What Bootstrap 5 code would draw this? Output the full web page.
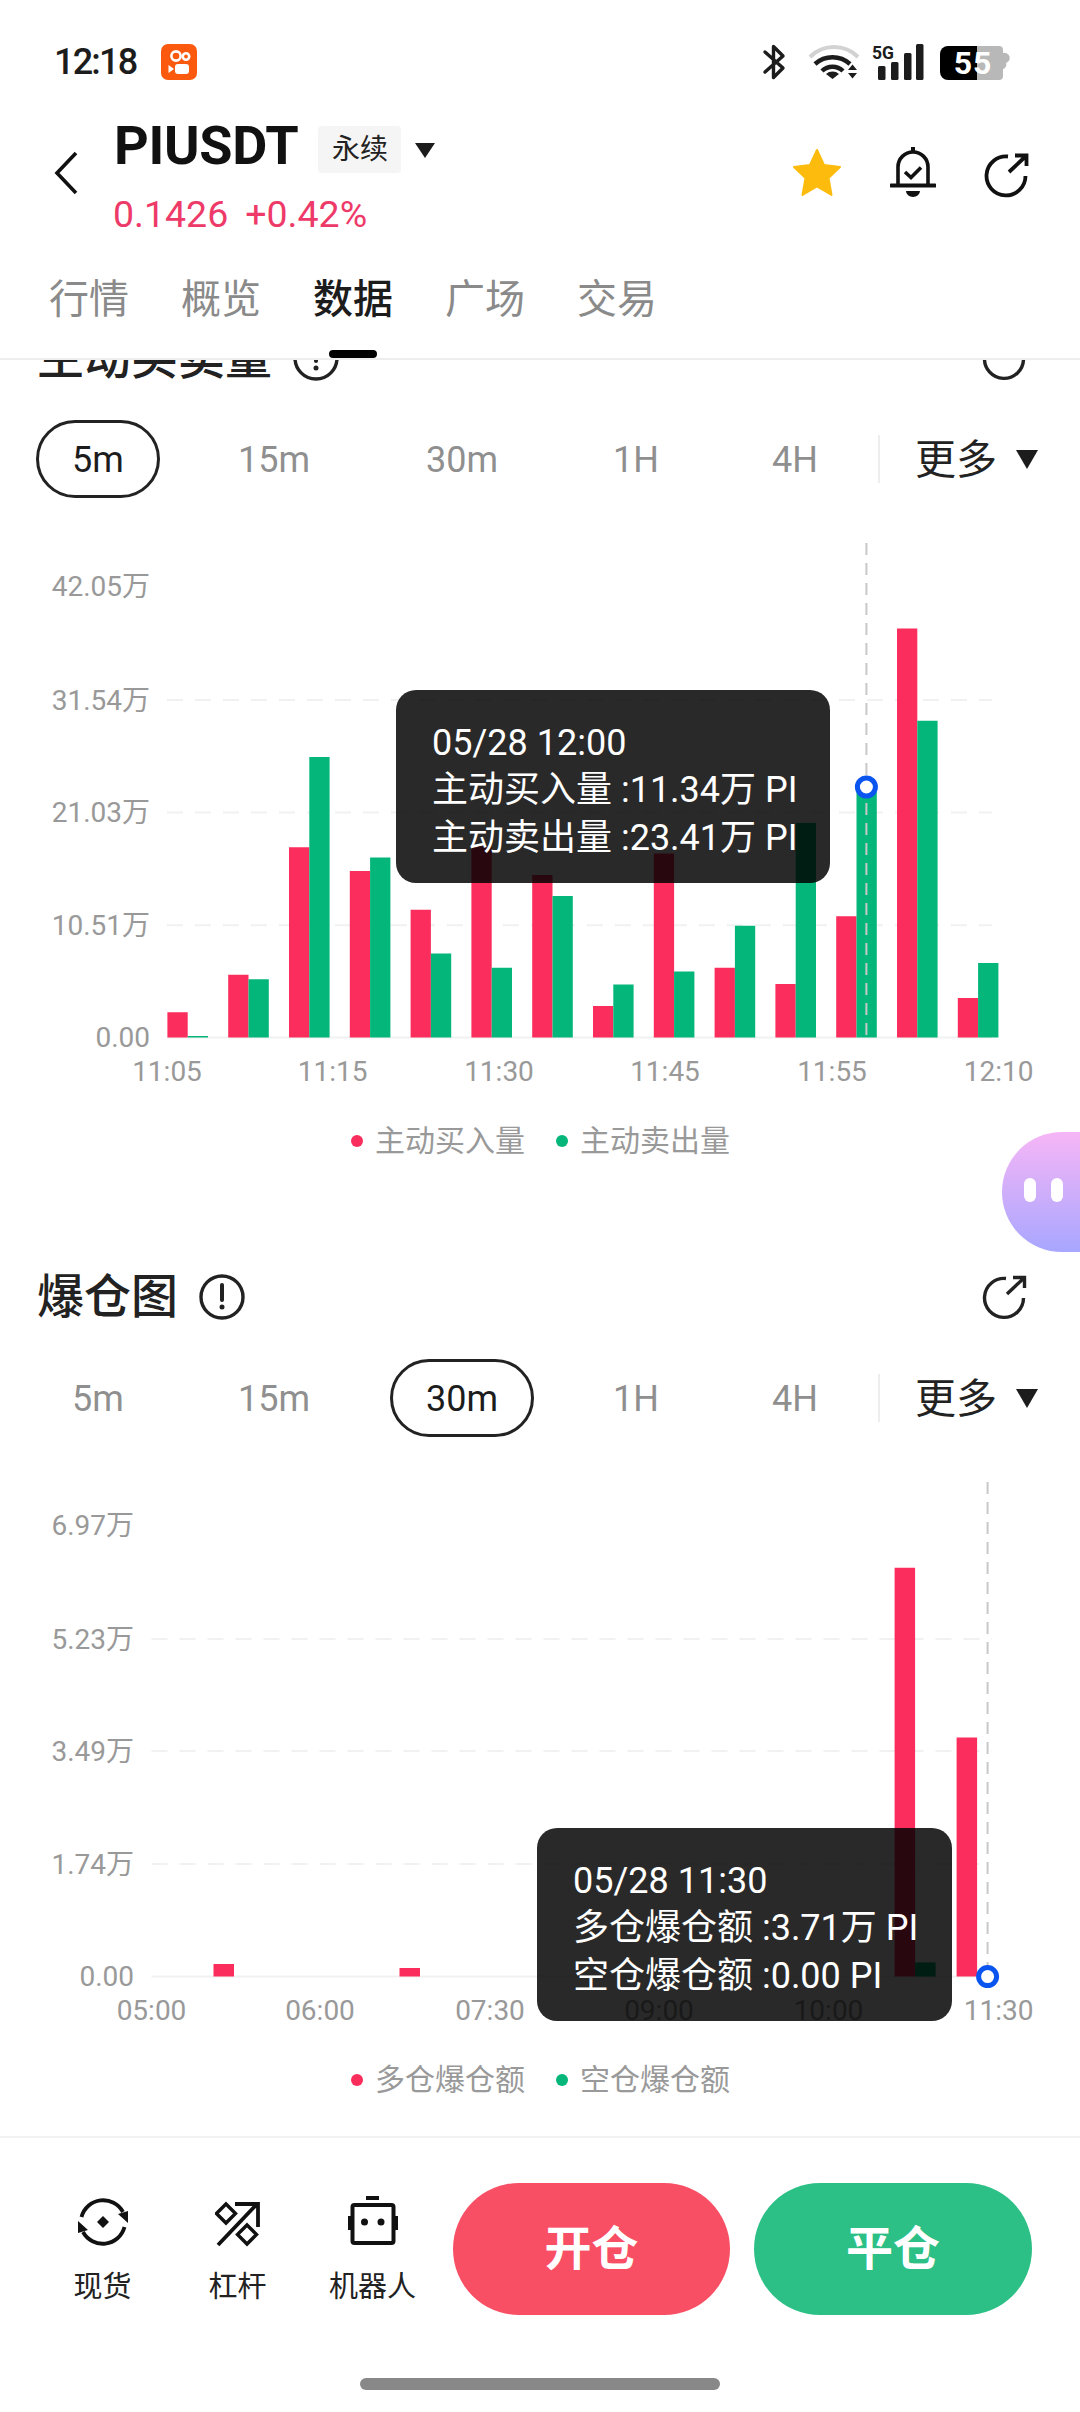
<!DOCTYPE html>
<html lang="zh">
<head>
<meta charset="utf-8">
<title>PIUSDT</title>
<link href="https://cdn.jsdelivr.net/npm/bootstrap@5.3.0/dist/css/bootstrap.min.css" rel="stylesheet">
<style>
html,body{margin:0;background:#fff}
body{font-family:Roboto,"Noto Sans CJK SC",sans-serif;color:#222}
svg{display:block;flex:none}
.phone{width:1080px;height:2412px;overflow:hidden;position:relative;background:#fff}
.sbar{height:118px;padding:40px 70px 0 54px}
.clock{font-size:36px;font-weight:500;line-height:44px;color:#1c1c1c;margin-right:25px;letter-spacing:-1.8px}
.navrow{height:118px;padding-left:54px;padding-right:50px}
.chev{margin-top:33px;margin-right:36px}
.sym{font-size:54px;font-weight:700;line-height:56px;color:#111;letter-spacing:-.3px}
.perp{width:83px;height:47px;background:#f5f5f5;border-radius:4px;font-size:28px;line-height:47px;text-align:center;margin:8px 14px 0 20px;color:#222}
.tri{width:0;height:0;border-left:10.5px solid transparent;border-right:10.5px solid transparent;border-top:15px solid #1c1c1c}
.pricex{font-size:37.500px;line-height:44px;color:#ee3a69;margin-top:18px;margin-left:-1px}
.pricex span+span{margin-left:17px}
.acts{margin-top:29px;gap:48px}
.tabsx{height:124px;border-bottom:2px solid #eee;padding:41px 0 0 49px;gap:52px;position:relative;background:#fff}
.tabsx a{font-size:40px;line-height:46px;color:#8a8a8a;text-decoration:none;padding:0;position:relative}
.tabsx a.act{color:#1c1c1c;font-weight:500}
.tabsx a.act::after{content:"";position:absolute;left:16px;width:48px;top:73px;height:8px;border-radius:4px;background:#000}
.scroll{height:1776px;overflow:hidden}
.scrollin{margin-top:-32.500px}
.ttlrow{height:60px;padding:0 52px 0 37px}
.ttl{font-size:47px;line-height:60px;font-weight:500;color:#222;margin-right:21px}
.prow{display:grid;grid-template-columns:124px 228px 148px 200px 118px auto;margin:32px 0 0 36px;height:78px;align-items:center}
.pcell{font-size:36px;color:#8f8f8f;text-align:center}
.pcell span{display:inline-block;padding:0 33px;height:78px;line-height:75px;border:3.500px solid transparent;border-radius:39px}
.pcell.on span{color:#1c1c1c;border-color:#222}
.moreb{margin-left:24px;border-left:2px solid #eee;height:48px;padding:2px 0 0 35px;font-size:41px;line-height:50px;color:#222;white-space:nowrap}
.moreb .tri{margin-left:19px;border-left-width:11.500px;border-right-width:11.500px;border-top-width:19px}
.chartx{position:relative;height:600px}
.chartx svg{margin-top:-1px}
.axl{font-size:28px;fill:#999;font-family:Roboto,"Noto Sans CJK SC",sans-serif}
.gridl{stroke:#f1f1f1;stroke-width:2;stroke-dasharray:16 12}
.basel{stroke:#f1f1f1;stroke-width:2}
.crossl{stroke:#c8c8c8;stroke-width:2;stroke-dasharray:12 8}
.tipx{position:absolute;height:193px;background:rgba(0,0,0,.84);border-radius:20px;color:#fff;font-size:36px;line-height:47.500px;padding:30px 0 0 36px;white-space:nowrap}
.tipa{left:396px;top:193px;width:434px}
.tipb{left:537px;top:392px;width:415px}
.legx{height:86px;padding:2px 0 0 351px;font-size:30px;color:#999;margin-bottom:84px}
.dotx{width:12px;height:12px;border-radius:50%;margin-right:12px}
.dotx.rd{background:#fb2d5c}
.dotx.gn{background:#04b67a;margin-left:31px}
.blobx{position:absolute;right:0;top:1132px;width:78px;height:120px;border-radius:60px 0 0 60px;background:linear-gradient(180deg,#f6b6f6,#a8a6ff);padding:46px 0 0 22px;gap:15px}
.blobx i{display:block;width:12px;height:24px;border-radius:6px;background:#fff}
.foot{height:275px;border-top:2px solid #f2f2f2;background:#fff}
.frow{padding:45px 48px 0 35px}
.fitem{width:135px;padding-top:13px;font-size:29px;line-height:40px;color:#222;text-align:center}
.fitem div{margin-top:19px}
.fitem .ficon{height:52px;margin-top:0}
.bigb{height:132px;width:277px;border-radius:66px;font-size:47px;font-weight:700;color:#fff;border:0;line-height:132px;padding:0}
.bigb:hover{color:#fff}
.bopen,.bopen:hover{background:#f94f65;margin-left:13px}
.bclose,.bclose:hover{background:#2cc086;margin-left:24px;width:278px}
.homeb{width:360px;height:12px;border-radius:6px;background:#888;margin:63px auto 0}
</style>
</head>
<body>
<div class="phone">

  <div class="sbar d-flex align-items-start">
    <span class="clock">12:18</span>
    <svg width="36" height="36" viewBox="0 0 36 36" style="margin-top:4px"><rect width="36" height="36" rx="7" fill="#fb5a0e"/><circle cx="15" cy="12" r="4.600" fill="none" stroke="#fff" stroke-width="2.600"/><circle cx="25" cy="12.500" r="3.200" fill="none" stroke="#fff" stroke-width="2.600"/><rect x="14" y="20" width="14" height="10" rx="3" fill="#fff"/><path d="M7.500 21l5.500 4-5.500 4z" fill="#fff"/></svg>
    <svg class="ms-auto" width="250" height="44" viewBox="760 40 250 44">
      <path d="M765 52l18 16-9.500 9.500V46.500L783 56l-18 16" fill="none" stroke="#1c1c1c" stroke-width="3.400" stroke-linejoin="round" stroke-linecap="round"/>
      <path d="M810 57a34 34 0 0 1 48 0" fill="none" stroke="#d2d2d2" stroke-width="4"/>
      <path d="M815 64a26 26 0 0 1 35 0M822 71a15 15 0 0 1 21 0" fill="none" stroke="#1c1c1c" stroke-width="4.500"/>
      <path d="M832.500 79l-6.500-5a10 10 0 0 1 13 0z" fill="#1c1c1c"/>
      <path d="M848 70l4.500-5.500 4.500 5.500zM848 73l4.500 5.500 4.500-5.500z" fill="#1c1c1c"/>
      <text x="872" y="59" font-size="19" font-weight="700" fill="#1c1c1c" textLength="22" lengthAdjust="spacingAndGlyphs">5G</text>
      <rect x="878" y="66" width="7.500" height="14" rx="1.500" fill="#1c1c1c"/><rect x="891" y="62" width="7.500" height="18" rx="1.500" fill="#1c1c1c"/><rect x="904" y="53" width="7.500" height="27" rx="1.500" fill="#1c1c1c"/><rect x="916" y="44" width="7.500" height="36" rx="1.500" fill="#1c1c1c"/>
      <path d="M977 46h22a4 4 0 0 1 4 4v3a4.500 4.500 0 0 1 3 10 4.500 4.500 0 0 1-3 6v7a4 4 0 0 1-4 4h-22z" fill="#b8b8b8"/>
      <path d="M977 46h-29a8 8 0 0 0-8 8v18a8 8 0 0 0 8 8h29z" fill="#000"/>
      <text x="973" y="74" text-anchor="middle" font-size="32" font-weight="700" fill="#fff" letter-spacing="1">55</text>
    </svg>
  </div>

  <div class="navrow d-flex align-items-start">
    <svg class="chev" width="24" height="44" viewBox="0 0 24 44"><path d="M22 2L3 22l19 20" fill="none" stroke="#111" stroke-width="3.600"/></svg>
    <div>
      <div class="d-flex align-items-start">
        <span class="sym">PIUSDT</span>
        <span class="perp">永续</span>
        <span class="tri" style="margin-top:25px"></span>
      </div>
      <div class="pricex"><span>0.1426</span><span>+0.42%</span></div>
    </div>
    <div class="acts ms-auto d-flex align-items-start">
      <svg width="50" height="50" viewBox="0 0 50 50"><path d="M25 3l7 15 16 2-11.500 11 3 17L25 39.500 10.500 48l3-17L2 20l16-2z" fill="#fdbb0d" stroke="#fdbb0d" stroke-width="2" stroke-linejoin="round"/></svg>
      <svg width="46" height="50" viewBox="0 0 46 50"><path d="M8 38V20a15 15 0 0 1 30 0v18" fill="none" stroke="#111" stroke-width="3.600"/><path d="M1 38.500h44" stroke="#111" stroke-width="4" stroke-linecap="round"/><path d="M23 0v5" stroke="#111" stroke-width="4"/><path d="M16 44h14a7 6 0 0 1-14 0z" fill="#111"/><path d="M15 25l6 5.500 10-10" fill="none" stroke="#111" stroke-width="3.600"/></svg>
      <svg width="46" height="46" viewBox="0 0 46 46" style="margin-top:5px"><path d="M24 4.500A19.500 19.500 0 1 0 41.500 24" fill="none" stroke="#111" stroke-width="3.800"/><path d="M25 20L42 4M31 3.500h11.500V14" fill="none" stroke="#111" stroke-width="3.800"/></svg>
    </div>
  </div>

  <nav class="tabsx nav">
    <a class="nav-link" href="#">行情</a>
    <a class="nav-link" href="#">概览</a>
    <a class="nav-link act" href="#">数据</a>
    <a class="nav-link" href="#">广场</a>
    <a class="nav-link" href="#">交易</a>
  </nav>

  <div class="scroll">
    <div class="scrollin">

      <section>
        <div class="ttlrow d-flex align-items-center">
          <span class="ttl">主动买卖量</span>
          <svg width="46" height="46" viewBox="0 0 46 46"><circle cx="23" cy="23" r="21" fill="none" stroke="#222" stroke-width="3.400"/><path d="M23 11v15" stroke="#222" stroke-width="4" stroke-linecap="round"/><circle cx="23" cy="33" r="2.500" fill="#222"/></svg>
          <svg class="ms-auto" width="46" height="46" viewBox="0 0 46 46"><path d="M24 4.500A19.500 19.500 0 1 0 41.500 24" fill="none" stroke="#222" stroke-width="3.400"/><path d="M25 20L42 4M31 3.500h11.500V14" fill="none" stroke="#222" stroke-width="3.400"/></svg>
        </div>
        <div class="prow">
          <div class="pcell on"><span>5m</span></div>
          <div class="pcell"><span>15m</span></div>
          <div class="pcell"><span>30m</span></div>
          <div class="pcell"><span>1H</span></div>
          <div class="pcell"><span>4H</span></div>
          <div class="moreb d-flex align-items-center">更多<span class="tri"></span></div>
        </div>
        <div class="chartx">
          <svg width="1080" height="600" viewBox="0 0 1080 600">
            <path class="gridl" d="M167 203H992M167 315.600H992M167 428.300H992"/>
            <path class="basel" d="M167 540.600H992"/>
            <g class="axl" text-anchor="end" dominant-baseline="central">
              <text x="150" y="89">42.05万</text><text x="150" y="203">31.54万</text><text x="150" y="315">21.03万</text><text x="150" y="428">10.51万</text><text x="150" y="540">0.00</text>
            </g>
            <g class="axl" text-anchor="middle" dominant-baseline="central">
              <text x="167" y="574">11:05</text><text x="332.600" y="574">11:15</text><text x="499" y="574">11:30</text><text x="665" y="574">11:45</text><text x="832" y="574">11:55</text><text x="998.600" y="574">12:10</text>
            </g>
            <path fill="#fb2d5c" d="M167.400 540.600V515.200h20.300V540.600zM228.200 540.600V477.700h20.300V540.600zM289 540.600V350.300h20.300V540.600zM349.800 540.600V374h20.300V540.600zM410.600 540.600V412.800h20.300V540.600zM471.400 540.600V349.500h20.300V540.600zM532.200 540.600V378.100h20.300V540.600zM593 540.600V509.100h20.300V540.600zM653.800 540.600V356.500h20.300V540.600zM714.600 540.600V470.800h20.300V540.600zM775.400 540.600V487.100h20.300V540.600zM836.200 540.600V419.300h20.300V540.600zM897 540.600V131.600h20.300V540.600zM957.800 540.600V501h20.300V540.600z"/>
            <path fill="#04b67a" d="M187.700 540.600V538.900h20.300V540.600zM248.500 540.600V482.200h20.300V540.600zM309.300 540.600V260.100h20.300V540.600zM370.100 540.600V360.600h20.300V540.600zM430.900 540.600V456.500h20.300V540.600zM491.700 540.600V470.800h20.300V540.600zM552.500 540.600V398.900h20.300V540.600zM613.300 540.600V487.500h20.300V540.600zM674.100 540.600V474.400h20.300V540.600zM734.900 540.600V428.700h20.300V540.600zM795.700 540.600V325.900h20.300V540.600zM856.500 540.600V294.400h20.300V540.600zM917.300 540.600V223.800h20.300V540.600zM978.100 540.600V465.900h20.300V540.600z"/>
            <path class="crossl" d="M866.400 46V540"/>
            <circle cx="866.400" cy="290" r="9" fill="#fff" stroke="#0a55f0" stroke-width="5"/>
          </svg>
          <div class="tipx tipa">05/28 12:00<br>主动买入量 :11.34万 PI<br>主动卖出量 :23.41万 PI</div>
        </div>
        <div class="legx d-flex align-items-center">
          <span class="dotx rd"></span><span>主动买入量</span>
          <span class="dotx gn"></span><span>主动卖出量</span>
        </div>
      </section>

      <section>
        <div class="ttlrow d-flex align-items-center">
          <span class="ttl">爆仓图</span>
          <svg width="46" height="46" viewBox="0 0 46 46"><circle cx="23" cy="23" r="21" fill="none" stroke="#222" stroke-width="3.400"/><path d="M23 11v15" stroke="#222" stroke-width="4" stroke-linecap="round"/><circle cx="23" cy="33" r="2.500" fill="#222"/></svg>
          <svg class="ms-auto" width="46" height="46" viewBox="0 0 46 46"><path d="M24 4.500A19.500 19.500 0 1 0 41.500 24" fill="none" stroke="#222" stroke-width="3.400"/><path d="M25 20L42 4M31 3.500h11.500V14" fill="none" stroke="#222" stroke-width="3.400"/></svg>
        </div>
        <div class="prow">
          <div class="pcell"><span>5m</span></div>
          <div class="pcell"><span>15m</span></div>
          <div class="pcell on"><span>30m</span></div>
          <div class="pcell"><span>1H</span></div>
          <div class="pcell"><span>4H</span></div>
          <div class="moreb d-flex align-items-center">更多<span class="tri"></span></div>
        </div>
        <div class="chartx">
          <svg width="1080" height="600" viewBox="0 0 1080 600">
            <path class="gridl" d="M151.500 203H992M151.500 315H992M151.500 428H992"/>
            <path class="basel" d="M151.500 540.600H992"/>
            <g class="axl" text-anchor="end" dominant-baseline="central">
              <text x="134" y="89">6.97万</text><text x="134" y="203">5.23万</text><text x="134" y="315">3.49万</text><text x="134" y="428">1.74万</text><text x="134" y="540">0.00</text>
            </g>
            <g class="axl" text-anchor="middle" dominant-baseline="central">
              <text x="151.500" y="574">05:00</text><text x="320" y="574">06:00</text><text x="490" y="574">07:30</text><text x="659" y="574">09:00</text><text x="828.500" y="574">10:00</text><text x="998.600" y="574">11:30</text>
            </g>
            <path fill="#fb2d5c" d="M213.500 540.600V528h20.500V540.600zM399.500 540.600V532h20.500V540.600zM894.600 540.600V131.800h20.500V540.600zM956.600 540.600V301.400h20.500V540.600z"/>
            <path fill="#04b67a" d="M915.100 540.600V526.400h20.500V540.600z"/>
            <path class="crossl" d="M987.600 46V530"/>
            <circle cx="987.600" cy="540.600" r="9" fill="#fff" stroke="#0a55f0" stroke-width="5"/>
          </svg>
          <div class="tipx tipb">05/28 11:30<br>多仓爆仓额 :3.71万 PI<br>空仓爆仓额 :0.00 PI</div>
        </div>
        <div class="legx d-flex align-items-center">
          <span class="dotx rd"></span><span>多仓爆仓额</span>
          <span class="dotx gn"></span><span>空仓爆仓额</span>
        </div>
      </section>

    </div>
  </div>

  <div class="foot">
    <div class="frow d-flex align-items-start">
      <div class="fitem">
        <div class="ficon d-flex justify-content-center"><svg width="52" height="52" viewBox="0 0 52 52"><path d="M4.500 21A22.500 22.500 0 0 1 46 16M47.500 31A22.500 22.500 0 0 1 6 36" fill="none" stroke="#111" stroke-width="3.800"/><path d="M41 18l10-3v12zM11 34l-10 3V25z" fill="#111"/><path d="M26 20l6 6-6 6-6-6z" fill="#111"/></svg></div>
        <div>现货</div>
      </div>
      <div class="fitem">
        <div class="ficon d-flex justify-content-center"><svg width="46" height="48" viewBox="0 0 46 48" style="margin-top:5px"><path d="M3 44L42 3M20 3h23v23" fill="none" stroke="#111" stroke-width="3.800"/><path d="M11 3l9.500 9.500L11 22 1.500 12.500zM32 24l9.500 9.500L32 43l-9.500-9.500z" fill="none" stroke="#111" stroke-width="3.400"/></svg></div>
        <div>杠杆</div>
      </div>
      <div class="fitem">
        <div class="ficon d-flex justify-content-center"><svg width="50" height="50" viewBox="0 0 50 50"><rect x="18" y="0" width="13" height="4" fill="#111"/><rect x="4.500" y="9" width="41" height="38" rx="2" fill="none" stroke="#111" stroke-width="4"/><rect x="0" y="20" width="3" height="14" fill="#111"/><rect x="47" y="20" width="3" height="14" fill="#111"/><circle cx="16.500" cy="26" r="3.500" fill="#111"/><circle cx="33" cy="26" r="3.500" fill="#111"/></svg></div>
        <div>机器人</div>
      </div>
      <button class="btn bigb bopen" type="button">开仓</button>
      <button class="btn bigb bclose" type="button">平仓</button>
    </div>
    <div class="homeb"></div>
  </div>

  <div class="blobx d-flex align-items-start"><i></i><i></i></div>
</div>
<script src="https://cdn.jsdelivr.net/npm/bootstrap@5.3.0/dist/js/bootstrap.bundle.min.js"></script>
</body>
</html>
